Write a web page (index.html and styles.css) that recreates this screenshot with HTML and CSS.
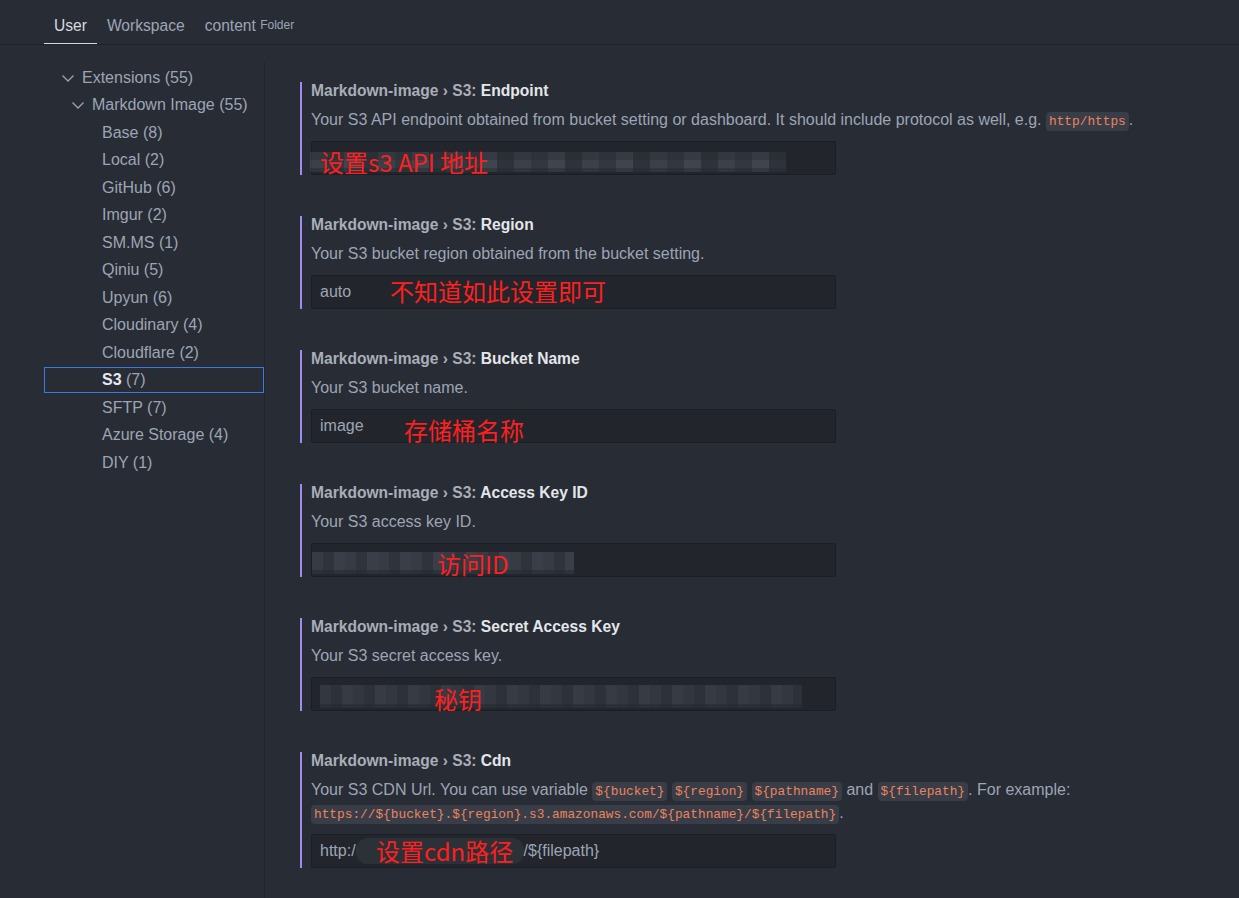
FILE: index.html
```html
<!DOCTYPE html>
<html lang="en">
<head>
<meta charset="utf-8">
<title>Settings</title>
<link rel="stylesheet" href="styles.css">
</head>
<body>
<div class="tabs">
  <div class="tab active">User</div>
  <div class="tab">Workspace</div>
  <div class="tab">content <span class="tab-sub">Folder</span></div>
</div>
<div class="main">
  <nav class="sidebar">
    <div class="row l1"><svg class="chev" viewBox="0 0 16 16"><path d="M2.5 5.5 8 11l5.5-5.5"/></svg><span>Extensions (55)</span></div>
    <div class="row l2"><svg class="chev" viewBox="0 0 16 16"><path d="M2.5 5.5 8 11l5.5-5.5"/></svg><span>Markdown Image (55)</span></div>
    <div class="row l3"><span>Base (8)</span></div>
    <div class="row l3"><span>Local (2)</span></div>
    <div class="row l3"><span>GitHub (6)</span></div>
    <div class="row l3"><span>Imgur (2)</span></div>
    <div class="row l3"><span>SM.MS (1)</span></div>
    <div class="row l3"><span>Qiniu (5)</span></div>
    <div class="row l3"><span>Upyun (6)</span></div>
    <div class="row l3"><span>Cloudinary (4)</span></div>
    <div class="row l3"><span>Cloudflare (2)</span></div>
    <div class="row l3 selected"><span><b>S3</b> (7)</span></div>
    <div class="row l3"><span>SFTP (7)</span></div>
    <div class="row l3"><span>Azure Storage (4)</span></div>
    <div class="row l3"><span>DIY (1)</span></div>
  </nav>
  <section class="settings">
    <div class="item">
      <div class="title"><span class="cat">Markdown-image › S3: </span><span class="label">Endpoint</span></div>
      <div class="desc">Your S3 API endpoint obtained from bucket setting or dashboard. It should include protocol as well, e.g. <code>http/https</code>.</div>
      <div class="input">
        <div class="mosaic m1"></div>
        <span class="note n1">设置s3 API 地址</span>
      </div>
    </div>
    <div class="item">
      <div class="title"><span class="cat">Markdown-image › S3: </span><span class="label">Region</span></div>
      <div class="desc">Your S3 bucket region obtained from the bucket setting.</div>
      <div class="input"><span class="val">auto</span><span class="note n2">不知道如此设置即可</span></div>
    </div>
    <div class="item">
      <div class="title"><span class="cat">Markdown-image › S3: </span><span class="label">Bucket Name</span></div>
      <div class="desc">Your S3 bucket name.</div>
      <div class="input"><span class="val">image</span><span class="note n3">存储桶名称</span></div>
    </div>
    <div class="item">
      <div class="title"><span class="cat">Markdown-image › S3: </span><span class="label">Access Key ID</span></div>
      <div class="desc">Your S3 access key ID.</div>
      <div class="input">
        <div class="mosaic m4"></div>
        <span class="note n4">访问ID</span>
      </div>
    </div>
    <div class="item">
      <div class="title"><span class="cat">Markdown-image › S3: </span><span class="label">Secret Access Key</span></div>
      <div class="desc">Your S3 secret access key.</div>
      <div class="input">
        <div class="mosaic m5"></div>
        <span class="note n5">秘钥</span>
      </div>
    </div>
    <div class="item">
      <div class="title"><span class="cat">Markdown-image › S3: </span><span class="label">Cdn</span></div>
      <div class="desc">Your S3 CDN Url. You can use variable <code>${bucket}</code> <code>${region}</code> <code>${pathname}</code> and <code>${filepath}</code>. For example: <code>https://${bucket}.${region}.s3.amazonaws.com/${pathname}/${filepath}</code>.</div>
      <div class="input"><span class="val">http:/</span><span class="blur6"></span><span class="val">/${filepath}</span><span class="note n6">设置cdn路径</span></div>
    </div>
  </section>
</div>
</body>
</html>
```

FILE: styles.css
```css
html, body {
  margin: 0;
  padding: 0;
  background: #282c34;
  height: 100%;
  overflow: hidden;
}
body {
  font-family: "Liberation Sans", "Noto Sans CJK SC", sans-serif;
  font-size: 16px;
  color: #9da5b4;
}
.tabs {
  display: flex;
  align-items: stretch;
  height: 44px;
  padding-left: 44px;
  border-bottom: 1px solid #1f2329;
}
.tab {
  padding: 0 10px;
  line-height: 52px;
  height: 44px;
  box-sizing: border-box;
  color: #9da5b4;
  font-size: 15.6px;
}
.tab.active {
  color: #d7dae0;
  border-bottom: 1px solid #d7dae0;
}
.tab-sub {
  font-size: 12px;
  position: relative;
  top: -2px;
}
.main {
  display: flex;
  height: calc(100% - 45px);
}
.sidebar {
  width: 220px;
  margin-left: 44px;
  margin-top: 17px;
  padding-top: 2px;
  border-right: 1px solid #21252b;
  flex-shrink: 0;
}
.row {
  height: 27.5px;
  display: flex;
  align-items: center;
  white-space: nowrap;
  box-sizing: border-box;
  padding-left: 36px;
  color: #9da5b4;
}
.row.l1 { padding-left: 16px; }
.row.l2 { padding-left: 26px; }
.row.l3 span { margin-left: 22px; }
.row .chev {
  width: 16px;
  height: 16px;
  margin-right: 6px;
  fill: none;
  stroke: #9da5b4;
  stroke-width: 1.3;
}
.row.selected {
  border: 1px solid #3b7ae0;
  height: 26px;
  margin: 0.75px 0;
  padding-left: 35px;
}
.row.selected b {
  color: #e6e9ee;
  font-weight: 700;
}
.settings {
  flex: 1;
  padding: 37px 0 0 35px;
}
.item {
  border-left: 2px solid #a08cf0;
  padding-left: 9px;
  margin-bottom: 41px;
}
.title {
  font-weight: 700;
  font-size: 15.6px;
  line-height: 18px;
  height: 18px;
}
.title .cat { color: #a9aeb8; }
.title .label { color: #e3e6ea; }
.desc {
  margin-top: 8px;
  line-height: 23px;
  color: #9da5b4;
  max-width: 910px;
}
code {
  font-family: "Liberation Mono", monospace;
  font-size: 12.8px;
  line-height: 1;
  color: #ec845f;
  background: #383d48;
  border-radius: 4px;
  padding: 2px 3px;
}
.input {
  position: relative;
  margin-top: 10px;
  width: 525px;
  height: 34px;
  box-sizing: border-box;
  background: #22262c;
  border: 1px solid #1b1e23;
  border-radius: 2px;
  display: flex;
  align-items: center;
  padding-left: 8px;
  color: #9da5b4;
}
.val { white-space: pre; }
.note {
  position: absolute;
  font-family: "Noto Sans CJK SC", sans-serif;
  color: #ff1f1f;
  font-size: 24px;
  line-height: 28px;
  white-space: nowrap;
}
.n1 { left: 8px; top: 6px; }
.n2 { left: 78px; top: 1px; }
.n3 { left: 92px; top: 6px; }
.n4 { left: 125px; top: 6px; }
.n5 { left: 122px; top: 7px; }
.n6 { left: 64px; top: 2px; }
.mosaic {
  position: absolute;
  top: 4px;
  height: 26px;
}
.m1 {
  left: -2px;
  width: 476px;
  background:
    repeating-linear-gradient(90deg, rgba(84,90,101,0.5) 0 17px, rgba(72,77,88,0.45) 17px 34px, rgba(92,98,110,0.5) 34px 51px, rgba(66,71,81,0.4) 51px 68px);
  -webkit-mask: linear-gradient(180deg, transparent 0 6px, rgba(0,0,0,0.7) 6px 14px, #000 14px 22px, rgba(0,0,0,0.6) 22px);
  mask: linear-gradient(180deg, transparent 0 6px, rgba(0,0,0,0.7) 6px 14px, #000 14px 22px, rgba(0,0,0,0.6) 22px);
}
.m4 {
  left: 0;
  width: 262px;
  background:
    repeating-linear-gradient(90deg, rgba(80,86,98,0.45) 0 11px, rgba(68,73,84,0.4) 11px 22px, rgba(88,94,106,0.45) 22px 33px);
  -webkit-mask: linear-gradient(180deg, transparent 0 4px, #000 4px 22px, rgba(0,0,0,0.5) 22px 26px);
  mask: linear-gradient(180deg, transparent 0 4px, #000 4px 22px, rgba(0,0,0,0.5) 22px 26px);
}
.m5 {
  left: 8px;
  width: 482px;
  background:
    repeating-linear-gradient(90deg, rgba(72,77,88,0.45) 0 11px, rgba(62,67,77,0.4) 11px 22px, rgba(80,86,97,0.45) 22px 33px);
  -webkit-mask: linear-gradient(180deg, transparent 0 3px, #000 3px 22px, rgba(0,0,0,0.5) 22px 26px);
  mask: linear-gradient(180deg, transparent 0 3px, #000 3px 22px, rgba(0,0,0,0.5) 22px 26px);
}
.blur6 {
  display: inline-block;
  width: 168px;
  height: 26px;
  background: rgba(54,59,68,0.5);
  border-radius: 12px;
}
```
